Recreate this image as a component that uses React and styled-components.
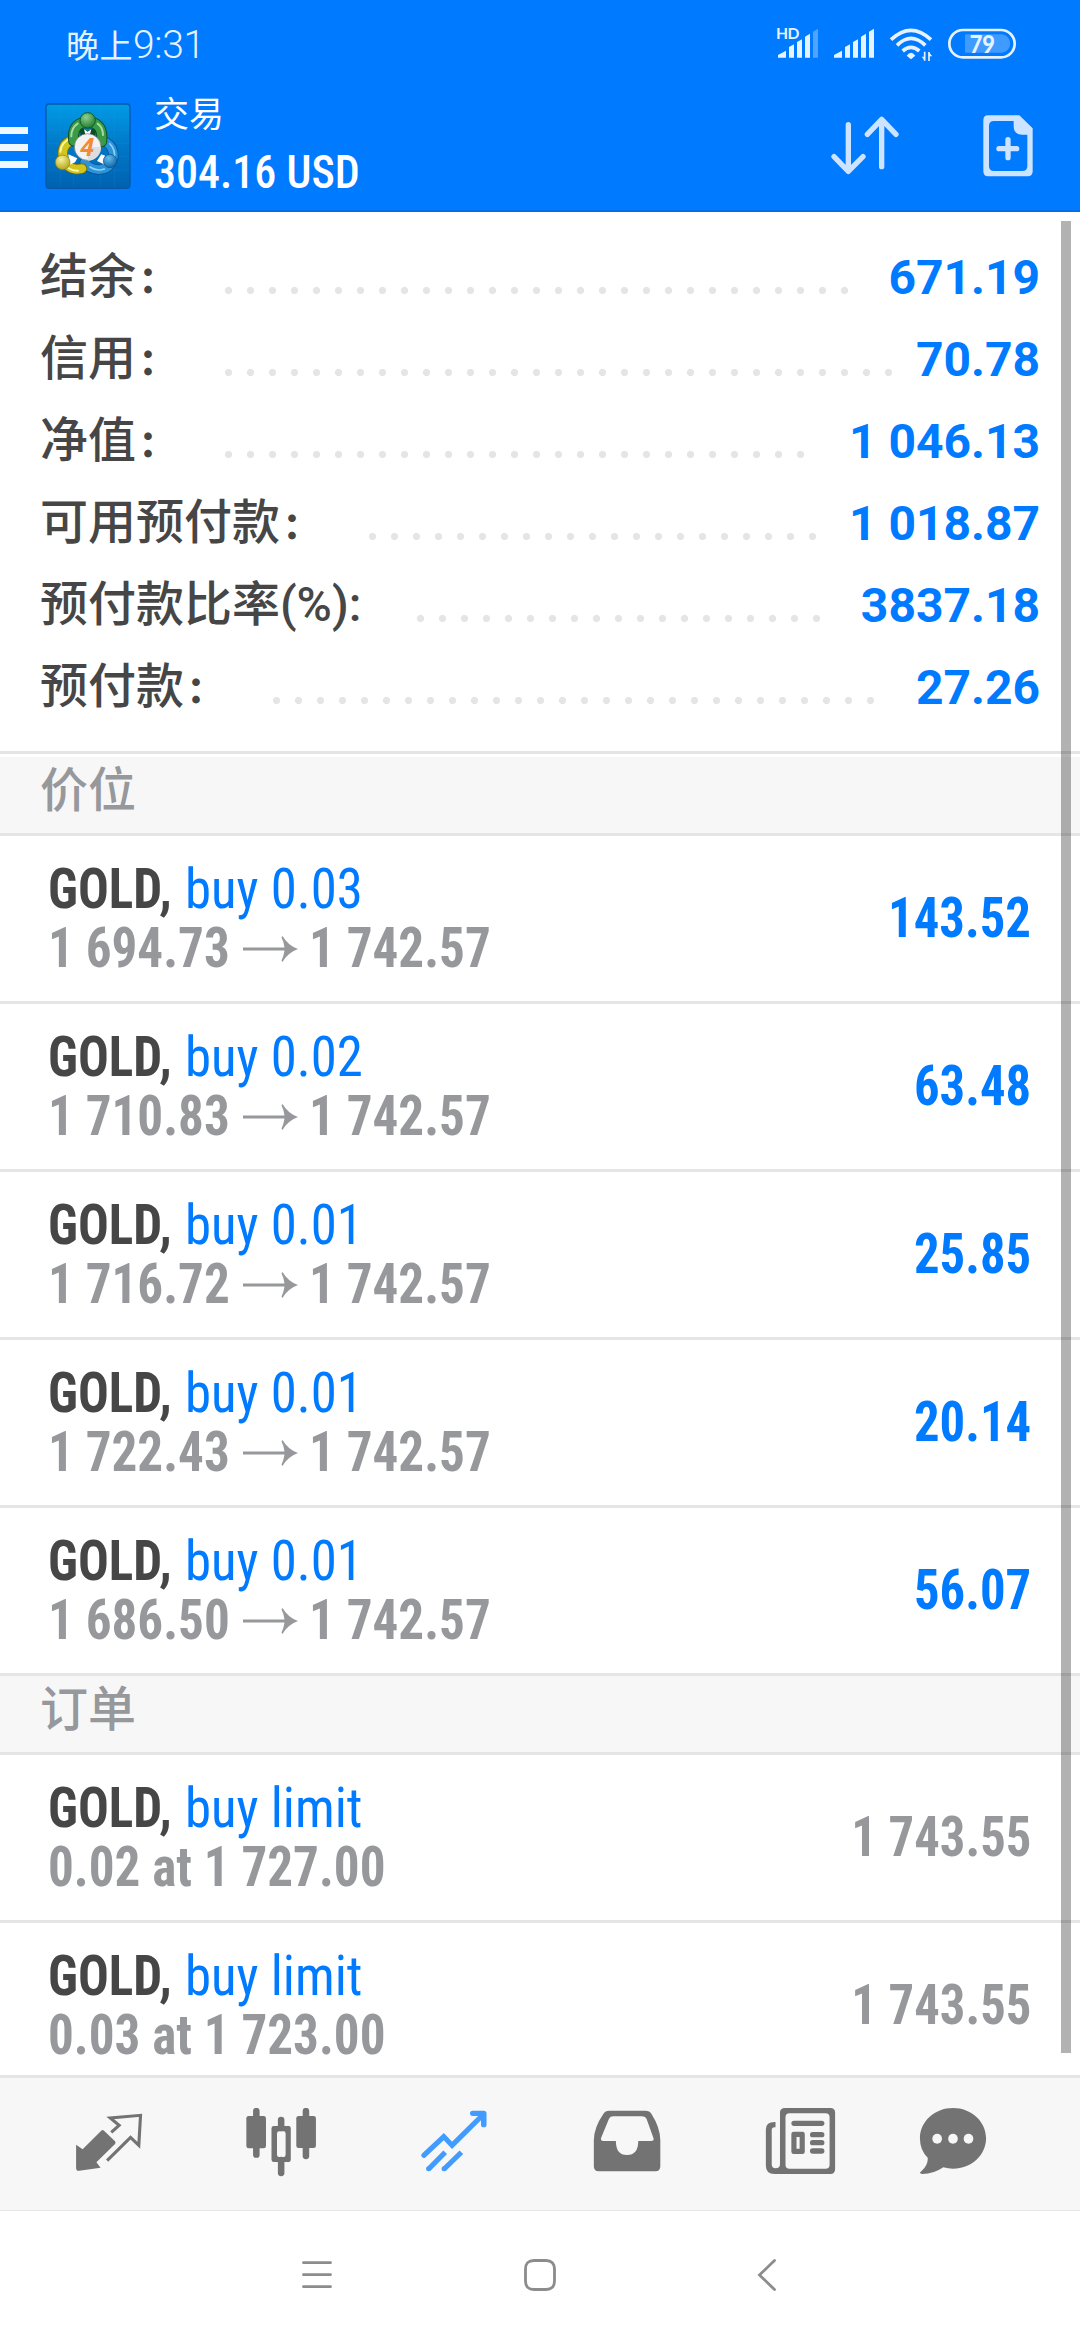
import styled, { createGlobalStyle, css } from 'styled-components';

const colors = {
  blue: '#007aff',
  dark: '#464646',
  gray: '#97989c',
  line: '#e5e5e5',
  panel: '#f7f7f7',
  icon: '#737373',
  iconActive: '#429bff',
};

const GlobalStyle = createGlobalStyle`
  * {
    box-sizing: border-box;
  }

  body {
    margin: 0;
    background: #fff;
    font-family: Roboto, 'Noto Sans CJK SC', sans-serif;
  }
`;

const condensed = css`
  font-family: 'Roboto Condensed', Roboto, 'Noto Sans CJK SC', sans-serif;
  font-stretch: 75%;
`;

const Screen = styled.div`
  position: relative;
  display: flex;
  flex-direction: column;
  width: 1080px;
  height: 2340px;
  overflow: hidden;
  background: #fff;
`;

const Header = styled.header`
  flex: none;
  height: 212px;
  background: ${colors.blue};
  border-bottom: 2px solid #006ee6;
`;

const StatusBar = styled.div`
  display: flex;
  justify-content: space-between;
  align-items: center;
  height: 88px;
  padding: 0 60px 0 66px;
`;

const Clock = styled.div`
  display: flex;
  align-items: baseline;
  margin-top: 4px;
  color: #e6f2ff;
  font-size: 33px;
  font-weight: 400;
  line-height: 84px;
  letter-spacing: 0.5px;
`;

const Digits = styled.span`
  font-size: 39px;
  font-weight: 350;
  letter-spacing: -0.3px;
`;

const StatusIcons = styled.div`
  display: flex;
  align-items: center;
  margin-top: -1px;
`;

const Toolbar = styled.div`
  display: flex;
  align-items: center;
  height: 116px;
`;

const Burger = styled.div`
  display: flex;
  flex-direction: column;
  gap: 9.6px;
  width: 28px;
  margin-top: 3px;

  span {
    height: 7px;
    background: #eff7ff;
  }
`;

const Heading = styled.div`
  flex: 1;
  padding-left: 23px;
  color: #fff;
`;

const Title = styled.div`
  font-size: 35px;
  font-weight: 400;
  line-height: 50px;
`;

const Profit = styled.div`
  ${condensed}
  font-size: 47px;
  font-weight: 500;
  line-height: 61px;
  transform: scaleX(0.937);
  transform-origin: left;
`;

const Actions = styled.div`
  display: flex;
  align-items: center;
  gap: 83px;
  padding-right: 47px;
`;

const Summary = styled.section`
  flex: none;
  height: 542px;
  padding: 24px 40px 0;
  border-bottom: 3px solid ${colors.line};
`;

const SummaryRow = styled.div`
  display: flex;
  align-items: center;
  height: 82px;
`;

const SummaryLabel = styled.span`
  height: 82px;
  margin-right: ${props => (props.$wide ? 15 : 0)}px;
  font-size: 48px;
  font-weight: 500;
  line-height: 82px;
  color: ${colors.dark};
  white-space: nowrap;
`;

const Colon = styled.span`
  display: inline-block;
  width: 48px;
  padding-left: 3px;
  font-size: 36px;
  font-weight: 900;
  line-height: 1;
`;

const Dots = styled.span`
  width: ${props => props.$count * 22}px;
  height: 9px;
  margin: 27px 0 0 33px;
  background: radial-gradient(circle at 11.5px 4.5px, #e5e5e5 3.2px, transparent 4px) 0 0 / 22px 9px repeat-x;
`;

const SummaryValue = styled.span`
  margin-left: auto;
  font-size: 48px;
  font-weight: 700;
  color: ${colors.blue};
`;

const SectionTitle = styled.h2`
  flex: none;
  height: ${props => (props.$first ? 82 : 79)}px;
  margin: 0;
  padding-left: 40px;
  border-top: ${props => (props.$first ? '3px solid #fff' : 'none')};
  border-bottom: 3px solid ${colors.line};
  background: ${colors.panel};
  color: ${colors.gray};
  font-size: 48px;
  font-weight: 500;
  line-height: 68px;
`;

const Row = styled.div`
  ${condensed}
  flex: none;
  display: flex;
  justify-content: space-between;
  align-items: flex-start;
  height: ${props => (props.$last ? 152 : 168)}px;
  padding: 0 49px 0 48px;
  border-bottom: ${props => (props.$last ? 'none' : `3px solid ${colors.line}`)};
  font-size: 55px;
  font-weight: 700;
  line-height: 59px;
  white-space: nowrap;
`;

const RowText = styled.div`
  margin-top: 24px;
`;

const RowLine = styled.div`
  display: flex;
  align-items: center;
  height: 59px;
  color: ${colors.gray};

  svg {
    flex: none;
    margin: 0 10px 0 13px;
  }
`;

const Symbol = styled.span`
  width: 137px;
  color: ${colors.dark};
  transform: scaleX(0.93);
  transform-origin: left;
`;

const Side = styled.span`
  font-weight: 400;
  color: ${colors.blue};
  transform: scaleX(0.96);
  transform-origin: left;
`;

const Price = styled.span`
  width: 181px;
  transform: scaleX(0.93);
  transform-origin: left;
`;

const RowValue = styled.div`
  margin-top: 53px;
  color: ${props => (props.$muted ? colors.gray : colors.blue)};
  transform: scaleX(0.922);
  transform-origin: right;
`;

const ScrollThumb = styled.div`
  position: absolute;
  top: 221px;
  left: 1061px;
  width: 10px;
  height: 1832px;
  background: rgba(0, 0, 0, 0.3);
`;

const TabBar = styled.nav`
  flex: none;
  display: flex;
  align-items: center;
  height: 136px;
  padding-left: 22px;
  border-top: 3px solid ${colors.line};
  border-bottom: 1px solid ${colors.line};
  background: ${colors.panel};
`;

const Tab = styled.div`
  display: flex;
  justify-content: center;
  width: ${props => (props.$narrow ? 130.8 : 173.2)}px;
  color: ${props => (props.$active ? colors.iconActive : colors.icon)};
`;

const SystemNav = styled.div`
  flex: none;
  display: flex;
  justify-content: space-between;
  width: 482px;
  margin: 48px 0 0 301px;
`;

const Logo = styled.svg`
  flex: none;
  margin-left: 17px;
`;

const summary = [
  { label: '结余', value: '671.19', dots: 29 },
  { label: '信用', value: '70.78', dots: 31 },
  { label: '净值', value: '1 046.13', dots: 27 },
  { label: '可用预付款', value: '1 018.87', dots: 21 },
  { label: '预付款比率(%):', value: '3837.18', dots: 19, wide: true },
  { label: '预付款', value: '27.26', dots: 28 },
];

const positions = [
  { side: 'buy 0.03', open: '1 694.73', now: '1 742.57', profit: '143.52' },
  { side: 'buy 0.02', open: '1 710.83', now: '1 742.57', profit: '63.48' },
  { side: 'buy 0.01', open: '1 716.72', now: '1 742.57', profit: '25.85' },
  { side: 'buy 0.01', open: '1 722.43', now: '1 742.57', profit: '20.14' },
  { side: 'buy 0.01', open: '1 686.50', now: '1 742.57', profit: '56.07' },
];

const orders = [
  { side: 'buy limit', detail: '0.02 at 1 727.00', price: '1 743.55' },
  { side: 'buy limit', detail: '0.03 at 1 723.00', price: '1 743.55' },
];

const StatusGlyphs = () => (
  <svg width="244" height="40" viewBox="108 70 732 120" fill="#e6f2ff">
    <text x="108" y="114" fontFamily="Lato" fontSize="47" fontWeight="700" textLength="70">HD</text>
    <path d="M114 171v-8l24-13v21zM147 171v-32l15-8v40zM171 171v-47l15-8v55zM195 171v-63l15-9v72z" />
    <path d="M219 171V93l15-9v87z" opacity="0.35" />
    <path d="M282 171v-8l24-13v21zM315 171v-32l15-8v40zM339 171v-47l15-8v55zM363 171v-63l15-9v72zM387 171V93l15-9v87z" />
    <g fill="none" stroke="#e6f2ff" strokeWidth="11">
      <path d="M453 117Q513 61 573 117" />
      <path d="M471 134Q513 92 556 134" />
      <path d="M488 151Q513 129 538 151" />
    </g>
    <path d="M500 165Q513 147 526 165L513 176z" />
    <path d="M554 153v27M567 181v-27" stroke="#e6f2ff" strokeWidth="5" />
    <path d="M545 168h10v13zM566 154l11 13h-11z" />
    <rect x="628" y="88" width="196" height="82" rx="41" fill="none" stroke="#e6f2ff" strokeWidth="8" />
    <path d="M678 101h106a26 27 0 0 1 0 55H678q-3 0-3-3v-49q0-3 3-3z" opacity="0.28" />
    <text x="689" y="156" fontFamily="Lato" fontSize="75" fontWeight="900" textLength="76" lengthAdjust="spacingAndGlyphs">79</text>
  </svg>
);

const AppLogo = () => (
  <Logo width="86" height="86" viewBox="135 308 258 258">
    <defs>
      <linearGradient id="tile" x1="0" y1="0" x2="0" y2="1">
        <stop offset="0" stopColor="#009be6" />
        <stop offset="0.5" stopColor="#0078c8" />
        <stop offset="1" stopColor="#0062b0" />
      </linearGradient>
      <radialGradient id="green" cx="0.4" cy="0.3" r="0.8">
        <stop offset="0" stopColor="#8fd08c" />
        <stop offset="1" stopColor="#16732b" />
      </radialGradient>
      <radialGradient id="yellow" cx="0.4" cy="0.3" r="0.8">
        <stop offset="0" stopColor="#f8f29a" />
        <stop offset="1" stopColor="#a99d0c" />
      </radialGradient>
      <radialGradient id="azure" cx="0.4" cy="0.3" r="0.8">
        <stop offset="0" stopColor="#68bdec" />
        <stop offset="1" stopColor="#035c9f" />
      </radialGradient>
    </defs>
    <rect x="138" y="311" width="252" height="253" rx="10" fill="url(#tile)" stroke="#0559a8" strokeWidth="4" />
    <path d="M181 314v248M221 314v248M301 314v248M343 314v248M141 349h246M141 389h246M141 429h246M141 469h246M141 509h246" stroke="#35a5e5" strokeOpacity="0.2" strokeWidth="2" />
    <g strokeLinecap="round" fill="none">
      <path d="M319 426Q342 440 340 470Q332 506 296 508Q266 506 254 486" stroke="#045294" strokeWidth="31" />
      <path d="M319 426Q342 440 340 470Q332 506 296 508Q266 506 254 486" stroke="#2b93da" strokeWidth="26" />
      <path d="M329 430Q347 447 343 474M270 500Q290 514 313 506" stroke="#8fd1f5" strokeWidth="5" />
      <path d="M224 417Q188 426 188 460Q194 504 230 507L246 505" stroke="#756a08" strokeWidth="31" />
      <path d="M224 417Q188 426 188 460Q194 504 230 507L246 505" stroke="#d2c51c" strokeWidth="26" />
      <path d="M217 411Q183 425 181 454M205 503Q218 512 234 511" stroke="#fbf7a4" strokeWidth="6" />
      <path d="M221 422Q216 380 244 368H282Q310 380 305 424" stroke="#0c5421" strokeWidth="33" />
      <path d="M221 422Q216 380 244 368H282Q310 380 305 424" stroke="#3a9a46" strokeWidth="27" />
      <path d="M214 408Q214 382 233 370M293 370Q309 382 309 404" stroke="#a7dba4" strokeWidth="6" />
    </g>
    <path d="M240 390L249 384Q263 398 277 384L288 392L284 410H242z" fill="#0a4c24" />
    <path d="M252 387L263 394L274 387L270 402H256z" fill="#fff" />
    <circle cx="263" cy="360" r="23" fill="url(#green)" stroke="#0c5f24" strokeWidth="3" />
    <path d="M205 462L232 474L225 486L208 494z" fill="#fff" />
    <circle cx="188" cy="486" r="22" fill="url(#yellow)" stroke="#8c8010" strokeWidth="2" />
    <path d="M291 482L304 462L316 466L312 492z" fill="#fff" />
    <circle cx="330" cy="482" r="20" fill="url(#azure)" stroke="#06508e" strokeWidth="2" />
    <circle cx="263" cy="440" r="40" fill="#f2f2f3" stroke="#65727a" strokeWidth="2" />
    <path d="M263 481a40 40 0 0 0 40-41h-40z" fill="#dcdde0" />
    <text x="262" y="466" textAnchor="middle" fontFamily="Open Sans" fontStyle="italic" fontSize="74" fontWeight="700" fill="#f28a36">4</text>
  </Logo>
);

const SortIcon = () => (
  <svg width="70" height="62" viewBox="270 345 210 186" fill="none" stroke="#cce4ff" strokeWidth="16" strokeLinecap="round" strokeLinejoin="round">
    <path d="M325 374v140M282 470l43 44 44-44M425 500V358M382 403l43-45 43 45" />
  </svg>
);

const NewOrderIcon = () => (
  <svg width="50" height="62" viewBox="729 345 150 186">
    <path
      d="M744 346h94l40 39v129q0 15-15 15H744q-14 0-14-15V361q0-15 14-15zm18 17q-15 0-15 15v120q0 15 15 15h85q15 0 15-15v-94h-15q-26 0-26-26v-15z"
      fill="#cce4ff"
      fillRule="evenodd"
    />
    <path d="M804 419v54M777 446h53" stroke="#cce4ff" strokeWidth="16" strokeLinecap="round" />
  </svg>
);

const ArrowIcon = () => (
  <svg width="57" height="28" viewBox="0 0 57 28" fill={colors.gray}>
    <path d="M1 12.5h41.5Q41.5 6 39.5 2.5L40.5 1Q46 10.5 56 14Q46 17.5 40.5 27L39.5 25.5Q41.5 22 42.5 15.5H1z" />
  </svg>
);

const TabIcon = ({ x, y, children }) => (
  <svg width="72" height="72" viewBox={`${x} ${y} 209 216`} preserveAspectRatio="none" fill="currentColor">
    {children}
  </svg>
);

const App = () => (
  <>
    <GlobalStyle />
    <Screen>
      <Header>
        <StatusBar>
          <Clock>晚上<Digits>9:31</Digits></Clock>
          <StatusIcons><StatusGlyphs /></StatusIcons>
        </StatusBar>
        <Toolbar>
          <Burger><span /><span /><span /></Burger>
          <AppLogo />
          <Heading>
            <Title>交易</Title>
            <Profit>304.16 USD</Profit>
          </Heading>
          <Actions>
            <SortIcon />
            <NewOrderIcon />
          </Actions>
        </Toolbar>
      </Header>

      <Summary>
        {summary.map(item => (
          <SummaryRow key={item.label}>
            <SummaryLabel $wide={item.wide}>
              {item.label}
              {!item.wide && <Colon>：</Colon>}
            </SummaryLabel>
            <Dots $count={item.dots} />
            <SummaryValue>{item.value}</SummaryValue>
          </SummaryRow>
        ))}
      </Summary>

      <SectionTitle $first>价位</SectionTitle>
      {positions.map(item => (
        <Row key={item.open}>
          <RowText>
            <RowLine>
              <Symbol>GOLD,</Symbol>
              <Side>{item.side}</Side>
            </RowLine>
            <RowLine>
              <Price>{item.open}</Price>
              <ArrowIcon />
              <Price>{item.now}</Price>
            </RowLine>
          </RowText>
          <RowValue>{item.profit}</RowValue>
        </Row>
      ))}

      <SectionTitle>订单</SectionTitle>
      {orders.map((item, index) => (
        <Row key={item.detail} $last={index === orders.length - 1}>
          <RowText>
            <RowLine>
              <Symbol>GOLD,</Symbol>
              <Side>{item.side}</Side>
            </RowLine>
            <RowLine>
              <Price>{item.detail}</Price>
            </RowLine>
          </RowText>
          <RowValue $muted>{item.price}</RowValue>
        </Row>
      ))}

      <TabBar>
        <Tab>
          <TabIcon x={211} y={144}>
            <path d="M220 254l19 14 54-56q4-4 8 0l32 32q3 4 0 8l-54 55 12 16-62 9q-9 2-9-9z" />
            <path d="M322 217l23-21-26-22 88-8-5 90-24-24-68 70" fill="none" stroke="currentColor" strokeWidth="9" />
          </TabIcon>
        </Tab>
        <Tab>
          <TabIcon x={714} y={144}>
            <rect x="715" y="168" width="57" height="97" rx="7" />
            <rect x="860" y="168" width="57" height="96" rx="7" />
            <path d="M744 153v131M888 153v135M816 180v24M816 300v39" stroke="currentColor" strokeWidth="19" strokeLinecap="round" />
            <path fillRule="evenodd" d="M795 198h43q6 0 6 7v94q0 7-6 7h-43q-7 0-7-7v-94q0-7 7-7zm15 16q-6 0-6 7v63q0 7 6 7h13q6 0 6-7v-63q0-7-6-7z" />
          </TabIcon>
        </Tab>
        <Tab $active>
          <TabIcon x={1217} y={144}>
            <g fill="none" stroke="currentColor" strokeWidth="15">
              <path d="M1231 286l58-56 24 26 86-88" strokeLinecap="round" />
              <path d="M1373 160h32v34" strokeWidth="16" strokeLinecap="round" strokeLinejoin="round" />
              <path d="M1245 327l48-50M1290 327l50-50" />
            </g>
            <circle cx="1245" cy="326" r="7.5" />
            <circle cx="1290" cy="326" r="7.5" />
          </TabIcon>
        </Tab>
        <Tab>
          <TabIcon x={151.7} y={234}>
            <path
              fillRule="evenodd"
              d="M202 242h105q12 0 17 9 26 42 26 80v78q0 15-14 15H171q-14 0-14-15v-78q0-38 28-80 5-9 17-9zm12 17q-10 0-13 7l-23 58q-2 9 7 9h36q0 42 32 42 33 0 33-42h37q10 0 7-9l-19-55q-4-10-15-10z"
            />
          </TabIcon>
        </Tab>
        <Tab>
          <TabIcon x={654.5} y={234}>
            <path
              fillRule="evenodd"
              d="M713 234h131q14 0 14 14v170q0 14-14 14H682q-25 0-25-25V298q0-23 28-22v16q-11-2-11 9v102q0 12 11 12 13 0 13-12V248q0-14 15-14zm13 16q-12 0-12 12v142q0 12 12 12h104q12 0 12-12V262q0-12-12-12z"
            />
            <path d="M739 280h80M793 314h26M793 338h26M793 363h26" stroke="currentColor" strokeWidth="16" strokeLinecap="round" />
            <path fillRule="evenodd" d="M738 305h25q7 0 7 7v53q0 7-7 7h-25q-7 0-7-7v-53q0-7 7-7zm8 16v35h9v-35z" />
          </TabIcon>
        </Tab>
        <Tab $narrow>
          <TabIcon x={1094.5} y={234}>
            <path d="M1199 234c54 0 96 41 96 91s-42 91-96 91q-14 0-28-4-28 20-61 20-12-2-3-8 19-17 19-40-23-23-23-59c0-50 42-91 96-91z" />
            <g fill={colors.panel}>
              <ellipse cx="1153" cy="326" rx="14" ry="15" />
              <ellipse cx="1199" cy="326" rx="14" ry="15" />
              <ellipse cx="1244" cy="326" rx="14" ry="15" />
            </g>
          </TabIcon>
        </Tab>
      </TabBar>

      <SystemNav>
        <svg width="32" height="32" viewBox="0 0 32 32" stroke="#8c8c8c" strokeWidth="2.8" strokeLinecap="round">
          <path d="M2.5 3.7h27M2.5 15.7h27M2.5 27.7h27" />
        </svg>
        <svg width="32" height="32" viewBox="2 0 32 32" fill="none" stroke="#8c8c8c" strokeWidth="2.8" overflow="visible">
          <path d="M10 1.5h12Q30.5 1.5 30.5 10v12q0 8.5-8.5 8.5H10Q1.5 30.5 1.5 22V10Q1.5 1.5 10 1.5z" />
        </svg>
        <svg width="32" height="32" viewBox="0 0 32 32" fill="none" stroke="#8c8c8c" strokeWidth="2.8" strokeLinecap="round">
          <path d="M23.5 1.5L8.5 16l15 14.5" />
        </svg>
      </SystemNav>

      <ScrollThumb />
    </Screen>
  </>
);

export default App;
